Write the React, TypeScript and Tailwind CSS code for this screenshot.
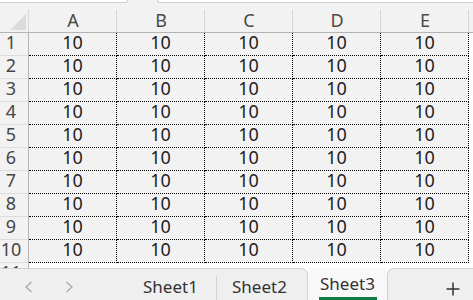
import React from "react";

const cols = ["A", "B", "C", "D", "E"];
const rows = [1, 2, 3, 4, 5, 6, 7, 8, 9, 10];

function Row({ n }: { n: number }) {
  return (
    <div className="flex h-[23px] shrink-0">
      <div className="w-[29px] shrink-0 border-r border-b border-r-[#b4b4b4] border-b-[#dcdcdc] bg-[#f2f2f2] pr-[6px] text-center text-[18px] leading-[19px] text-[#454545]">
        {n}
      </div>
      {cols.map((c) => (
        <div
          key={c}
          className="w-[88px] shrink-0 border-r border-b border-dotted border-black bg-[#f2f2f2] text-center text-[18px] leading-[19px] text-[#1e1e1e]"
        >
          10
        </div>
      ))}
      <div className="flex-1 bg-white" />
    </div>
  );
}

export default function App() {
  return (
    <div className="w-[473px] h-[300px] overflow-hidden bg-white flex flex-col font-['Noto_Sans',sans-serif]">
      {/* top strip */}
      <div className="flex h-[3px] shrink-0 bg-[#f2f2f2]">
        <div className="w-[128px] h-[3px] bg-white border-b border-r border-[#d0d0d0] rounded-br-[4px]" />
        <div className="w-[29px]" />
        <div className="flex-1 h-[3px] bg-white border-b border-l border-[#d0d0d0] rounded-bl-[4px]" />
      </div>
      {/* column header */}
      <div className="flex h-[30px] shrink-0 bg-[#f2f2f2] border-b border-[#b4b4b4]">
        <div className="relative w-[29px] shrink-0 after:absolute after:right-0 after:top-[7px] after:bottom-0 after:w-px after:bg-[#d6d6d6]">
          <svg className="absolute left-[10px] top-[11px]" width="16" height="16" viewBox="0 0 16 16">
            <polygon points="16,0 16,16 0,16" fill="#dbdbdb" />
          </svg>
        </div>
        {cols.map((c) => (
          <div
            key={c}
            className="relative w-[88px] shrink-0 pt-[8px] text-center text-[18px] leading-[18px] text-[#4a4a4a] after:absolute after:right-0 after:top-[7px] after:bottom-0 after:w-px after:bg-[#d6d6d6]"
          >
            {c}
          </div>
        ))}
        <div className="flex-1" />
      </div>
      {/* rows */}
      {rows.map((n) => (
        <Row key={n} n={n} />
      ))}
      {/* partial row 11 */}
      <div className="flex h-[5px] shrink-0 overflow-hidden">
        <div className="w-[29px] h-[23px] shrink-0 border-r border-[#b4b4b4] bg-[#f2f2f2] pr-[6px] text-center text-[18px] leading-[19px] text-[#454545]">
          11
        </div>
        <div className="flex-1 bg-white" />
      </div>
      {/* tab bar */}
      <div className="flex h-[32px] shrink-0">
        <div className="flex w-[308px] shrink-0 border-t border-r border-[#d2d2d2] rounded-tr-[7px] bg-[#efefef]">
          <div className="flex w-[129px] shrink-0 items-start pt-[12px] pl-[24px] gap-[32px]">
            <svg width="9" height="12" viewBox="0 0 9 12" fill="none">
              <path d="M7.5 1 L2 6 L7.5 11" stroke="#a6a6a6" strokeWidth="1.2" />
            </svg>
            <svg width="9" height="12" viewBox="0 0 9 12" fill="none">
              <path d="M1.5 1 L7 6 L1.5 11" stroke="#a6a6a6" strokeWidth="1.2" />
            </svg>
          </div>
          <div className="w-[87px] shrink-0 pl-[14px] pt-[9px] text-[17px] leading-[18px] text-[#333]">
            Sheet1
          </div>
          <div className="w-px h-[24px] self-end bg-[#d2d2d2]" />
          <div className="flex-1 pl-[15px] pt-[9px] text-[17px] leading-[18px] text-[#333]">
            Sheet2
          </div>
        </div>
        <div className="flex w-[79px] shrink-0 flex-col justify-between bg-[#f8f8f8]">
          <div className="pl-[12px] pt-[7px] text-[17px] leading-[18px] text-[#333]">Sheet3</div>
          <div className="ml-[11px] w-[58px] h-[3px] bg-[#107c41]" />
        </div>
        <div className="flex-1 border-t border-l border-[#d2d2d2] rounded-tl-[7px] bg-[#efefef] pl-[58px] pt-[13px]">
          <svg width="14" height="14" viewBox="0 0 14 14" fill="none">
            <path d="M7 0.5 V13.5 M0.5 7 H13.5" stroke="#333" strokeWidth="1.5" />
          </svg>
        </div>
      </div>
    </div>
  );
}
